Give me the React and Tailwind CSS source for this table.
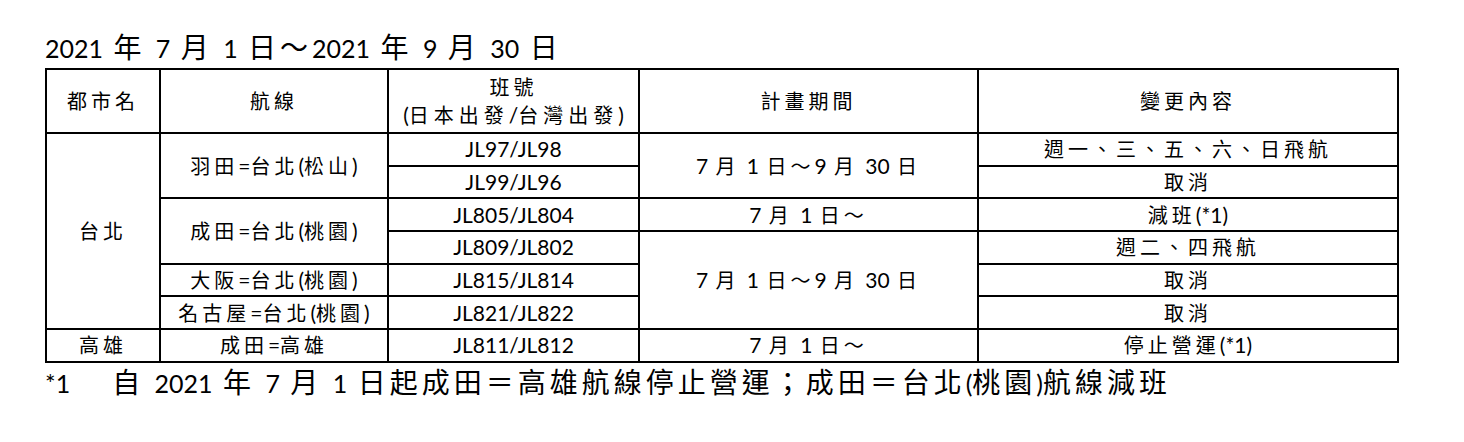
import React from "react";

// CJK runs get their own size / tracking so Latin digits can stay narrow (Calibri-like)
const CJK = /([\u3000-\u303f\u4e00-\u9fff\uff00-\uffef]+)/;

function Mixed({ text, cjk }) {
  return text.split(CJK).map((part, i) =>
    CJK.test(part) ? (
      <span key={i} className={cjk}>
        {part}
      </span>
    ) : (
      part
    )
  );
}

const cell = "border-2 border-black text-center align-middle p-0 whitespace-nowrap";
const cellCjk = "text-[20px] tracking-[4px]";

function Cell({ text, rowSpan }) {
  return (
    <td rowSpan={rowSpan} className={cell}>
      <Mixed text={text} cjk={cellCjk} />
    </td>
  );
}

const App = () => {
  const rows = [
    { city: "台北", cityRows: 6, route: "羽田=台北(松山)", routeRows: 2, flight: "JL97/JL98", period: "7 月 1 日～9 月 30 日", periodRows: 2, change: "週一、三、五、六、日飛航" },
    { flight: "JL99/JL96", change: "取消" },
    { route: "成田=台北(桃園)", routeRows: 2, flight: "JL805/JL804", period: "7 月 1 日～", periodRows: 1, change: "減班(*1)" },
    { flight: "JL809/JL802", period: "7 月 1 日～9 月 30 日", periodRows: 3, change: "週二、四飛航" },
    { route: "大阪=台北(桃園)", routeRows: 1, flight: "JL815/JL814", change: "取消" },
    { route: "名古屋=台北(桃園)", routeRows: 1, flight: "JL821/JL822", change: "取消" },
    { city: "高雄", cityRows: 1, route: "成田=高雄", routeRows: 1, flight: "JL811/JL812", period: "7 月 1 日～", periodRows: 1, change: "停止營運(*1)" },
  ];

  return (
    <div className="min-h-[442px] bg-white text-black pl-[45px] pt-[27px] font-['Lato','Noto_Sans_CJK_TC',sans-serif]">
      {/* Title */}
      <div className="text-[25px] leading-[40px] whitespace-nowrap [word-spacing:4px]">
        <Mixed text="2021 年 7 月 1 日～2021 年 9 月 30 日" cjk="text-[28px] tracking-[4px]" />
      </div>

      {/* Schedule table */}
      <table className="border-collapse table-fixed w-[1352px] text-[21px] leading-[28px] [word-spacing:2px]">
        <colgroup>
          <col className="w-[114px]" />
          <col className="w-[228px]" />
          <col className="w-[251px]" />
          <col className="w-[339px]" />
          <col className="w-[420px]" />
        </colgroup>
        <thead>
          <tr className="h-[64px]">
            <Cell text="都市名" />
            <Cell text="航線" />
            <td className={cell}>
              <div>
                <Mixed text="班號" cjk={cellCjk} />
              </div>
              <div>
                <Mixed text="(日本出發/台灣出發)" cjk="text-[20px] tracking-[5px]" />
              </div>
            </td>
            <Cell text="計畫期間" />
            <Cell text="變更內容" />
          </tr>
        </thead>
        <tbody>
          {rows.map((r, i) => (
            <tr key={i} className="h-[32.7px]">
              {r.city && <Cell text={r.city} rowSpan={r.cityRows} />}
              {r.route && <Cell text={r.route} rowSpan={r.routeRows} />}
              <Cell text={r.flight} />
              {r.period && <Cell text={r.period} rowSpan={r.periodRows} />}
              <Cell text={r.change} />
            </tr>
          ))}
        </tbody>
      </table>

      {/* Footnote */}
      <div className="text-[25px] leading-[38px] whitespace-nowrap [word-spacing:4px]">
        <span>*1</span>
        <span className="ml-[42px]">
          <Mixed text="自 2021 年 7 月 1 日起成田＝高雄航線停止營運；成田＝台北(桃園)航線減班" cjk="text-[28px] tracking-[4px]" />
        </span>
      </div>
    </div>
  );
};

export default App;
